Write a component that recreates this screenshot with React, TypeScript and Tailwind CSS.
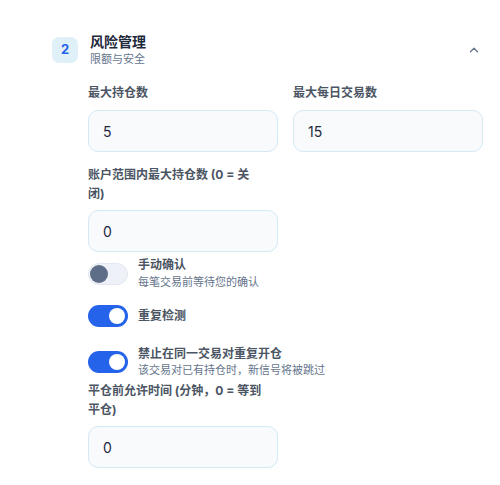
import { ChevronUp } from "lucide-react";

const font = {
  fontFamily: 'Inter, "Noto Sans CJK SC", sans-serif',
};

function Toggle({ on }: { on: boolean }) {
  return (
    <div
      className={
        on
          ? "relative h-[22px] w-[40px] shrink-0 rounded-full bg-[#2563eb]"
          : "relative h-[22px] w-[40px] shrink-0 rounded-full border border-[#e2e8f0] bg-[#eef1f7]"
      }
    >
      <span
        className={
          on
            ? "absolute right-[3px] top-[3px] h-[16px] w-[16px] rounded-full bg-white"
            : "absolute left-[1px] top-[1px] h-[18px] w-[18px] rounded-full bg-[#5f6e88]"
        }
      />
    </div>
  );
}

function Field({ value }: { value: string }) {
  return (
    <div className="flex h-[42px] w-[190px] items-center rounded-[10px] border border-[#d5e9f5] bg-[#f8fafc] px-[14px] text-[14px] text-[#1e293b]">
      {value}
    </div>
  );
}

function Label({ children, className = "" }: { children: React.ReactNode; className?: string }) {
  return (
    <div className={"text-[12px] font-bold leading-[18.5px] text-[#4b5563] " + className}>
      {children}
    </div>
  );
}

export default function App() {
  return (
    <div className="h-[485px] w-[500px] overflow-hidden bg-white pt-[33px]" style={font}>
      {/* header */}
      <div className="flex items-center pl-[52px] pr-[19px]">
        <div className="flex h-[26px] w-[26px] items-center justify-center rounded-[7px] bg-[#e0f0f9] text-[13px] font-bold text-[#2563eb]">
          2
        </div>
        <div className="ml-3 flex-1">
          <div className="text-[14px] font-bold leading-[18px] text-[#1e293b]">风险管理</div>
          <div className="mt-px text-[11px] leading-[15px] text-[#64748b]">限额与安全</div>
        </div>
        <ChevronUp className="h-[14px] w-[14px] text-[#64748b]" strokeWidth={2.25} />
      </div>

      <div className="pl-[88px]">
        <div className="mt-[17px] grid grid-cols-[190px_190px] gap-x-[15px]">
          <div>
            <Label className="mb-2 leading-[18px]">最大持仓数</Label>
            <Field value="5" />
          </div>
          <div>
            <Label className="mb-2 leading-[18px]">最大每日交易数</Label>
            <Field value="15" />
          </div>
        </div>

        <Label className="mt-[14px] mb-[7px]">
          账户范围内最大持仓数 (0 = 关
          <br />
          闭)
        </Label>
        <Field value="0" />

        <div className="mt-[5px] flex items-center gap-[10px]">
          <Toggle on={false} />
          <div>
            <div className="text-[12px] font-bold leading-4 text-[#4b5563]">手动确认</div>
            <div className="mt-px text-[11px] leading-4 text-[#64748b]">每笔交易前等待您的确认</div>
          </div>
        </div>

        <div className="mt-[15px] flex items-center gap-[10px]">
          <Toggle on={true} />
          <div className="text-[12px] font-bold leading-4 text-[#4b5563]">重复检测</div>
        </div>

        <div className="mt-[19px] flex items-center gap-[10px]">
          <Toggle on={true} />
          <div>
            <div className="text-[12px] font-bold leading-4 text-[#4b5563]">禁止在同一交易对重复开仓</div>
            <div className="text-[11px] leading-4 text-[#64748b]">该交易对已有持仓时，新信号将被跳过</div>
          </div>
        </div>

        <Label className="mt-[4px] mb-[7px]">
          平仓前允许时间 (分钟，0 = 等到
          <br />
          平仓)
        </Label>
        <Field value="0" />
      </div>
    </div>
  );
}
